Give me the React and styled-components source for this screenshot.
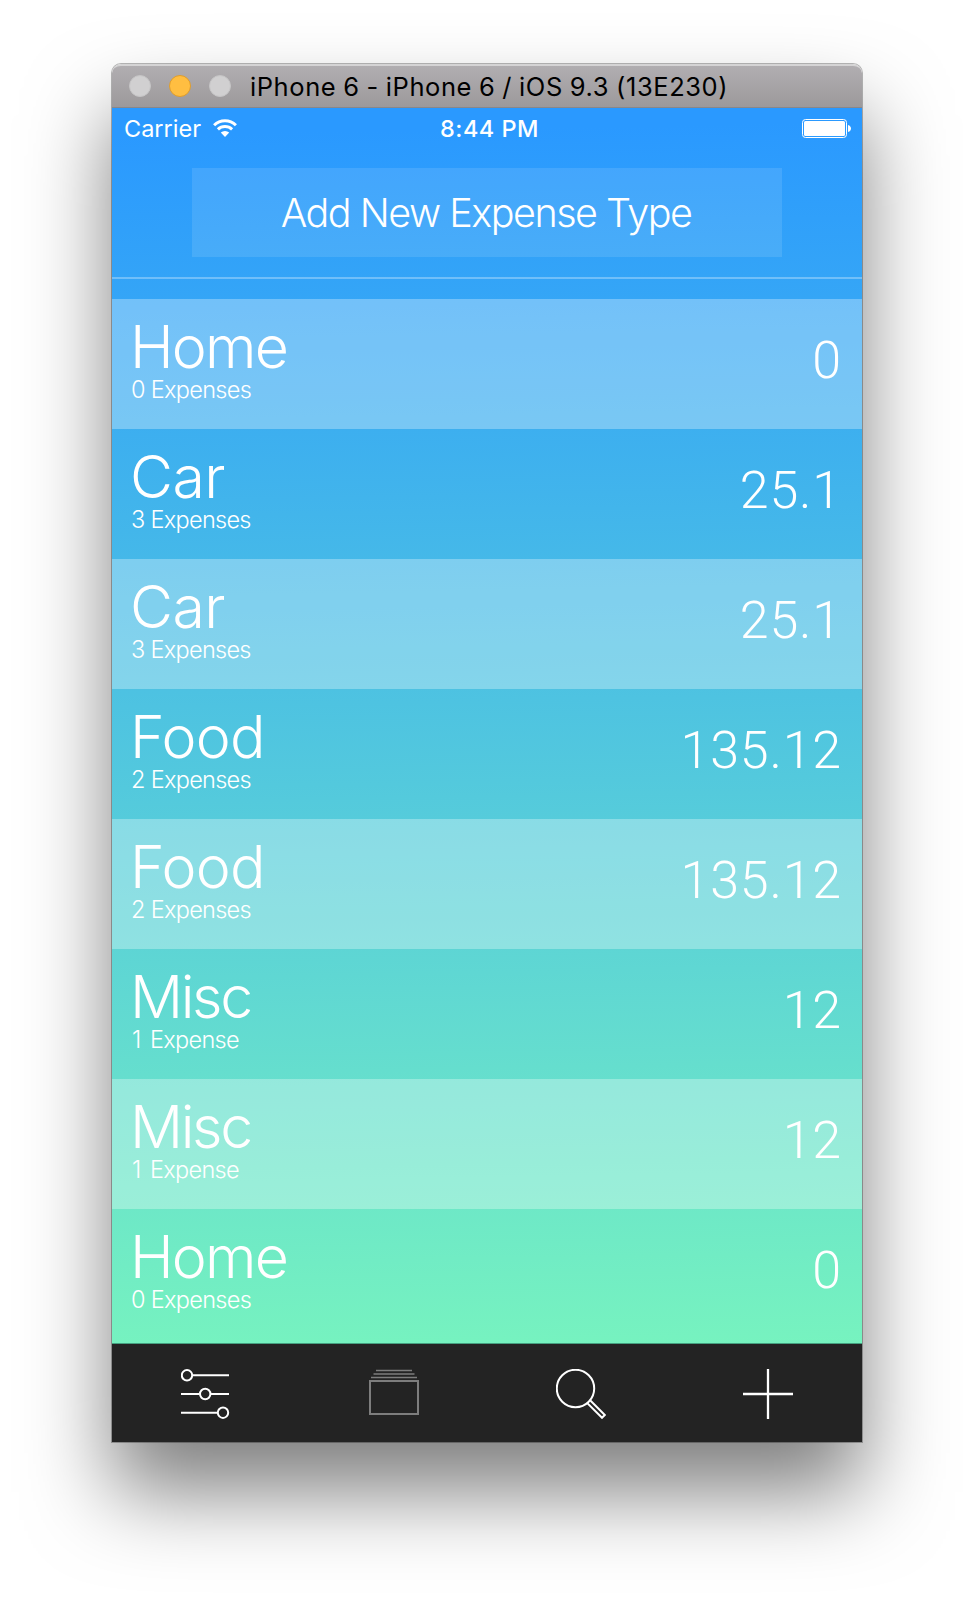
import React from "react";
import styled, { createGlobalStyle } from "styled-components";

const GlobalStyle = createGlobalStyle`
  * { box-sizing: border-box; }
  html, body { margin: 0; background: #fff; }
  body { overflow: hidden; }
`;

const Desktop = styled.div`
  width: 974px;
  height: 1602px;
  padding: 64px 112px 0;
  background: #fff;
  font-family: Inter, "Liberation Sans", sans-serif;
`;

const Window = styled.div`
  width: 750px;
  height: 1378px;
  display: flex;
  flex-direction: column;
  border-radius: 9px 9px 0 0;
  box-shadow: 0 0 0 1px rgba(0, 0, 0, 0.28), 0 50px 84px rgba(0, 0, 0, 0.5);
`;

const TitleBar = styled.header`
  height: 44px;
  flex: none;
  display: flex;
  align-items: center;
  gap: 18px;
  padding: 0 17px;
  background: linear-gradient(#b1aeb1, #9c999b);
  border-top: 2px solid #d5d4d5;
  border-bottom: 1px solid #8a8789;
  border-radius: 9px 9px 0 0;
`;

const Light = styled.span`
  width: 22px;
  height: 22px;
  margin-top: -1px;
  border-radius: 50%;
  background: ${(p) => (p.$on ? "#ffbe41" : "#d1d0d1")};
  border: 1px solid ${(p) => (p.$on ? "#e09e2c" : "#c6c5c6")};
`;

const WindowTitle = styled.span`
  margin-left: 1px;
  font-size: 25.5px;
  line-height: 40px;
  letter-spacing: 0.58px;
  word-spacing: -0.8px;
  white-space: pre;
  color: #000;
`;

const Screen = styled.main`
  flex: 1;
  min-height: 0;
  display: flex;
  flex-direction: column;
  background: linear-gradient(179deg, #2a99ff 2%, #77f3bf 93%);
  color: #fff;
`;

const StatusBar = styled.div`
  height: 40px;
  flex: none;
  display: grid;
  grid-template-columns: 1fr auto 1fr;
  align-items: center;
  padding: 0 11px 0 12px;
`;

const Carrier = styled.div`
  display: flex;
  align-items: center;
  gap: 12px;
  font-size: 23.5px;
  letter-spacing: 0;
`;

const Clock = styled.div`
  padding-left: 4px;
  font-size: 23.5px;
  font-weight: 550;
  letter-spacing: 0.5px;
`;

const Battery = styled.div`
  display: flex;
  justify-content: flex-end;
`;

const AddArea = styled.div`
  height: 131px;
  flex: none;
  display: flex;
  justify-content: center;
  align-items: flex-start;
  padding-top: 20px;
  border-bottom: 2px solid rgba(255, 255, 255, 0.3);
`;

const AddButton = styled.button`
  width: 590px;
  height: 89px;
  border: 0;
  padding: 2px 2px 0 0;
  background: rgba(255, 255, 255, 0.11);
  color: #fff;
  font: 300 39.5px/87px Inter, sans-serif;
  letter-spacing: -1.5px;
`;

const List = styled.ul`
  flex: 1;
  min-height: 0;
  margin: 20px 0 0;
  padding: 0;
  list-style: none;
`;

const Row = styled.li`
  height: 130px;
  display: flex;
  justify-content: space-between;
  padding: 0 20px 0 19px;
  background: ${(p) => (p.$tinted ? "rgba(255, 255, 255, 0.31)" : "transparent")};
`;

const Labels = styled.div`
  display: flex;
  flex-direction: column;
  padding-top: 18px;
`;

const Name = styled.span`
  margin-left: -1px;
  font-size: 59px;
  font-weight: 300;
  line-height: 60px;
  letter-spacing: ${(p) => p.$track};
`;

const Count = styled.span`
  font-size: 23.5px;
  font-weight: 300;
  line-height: 26px;
  letter-spacing: -0.7px;
  word-spacing: ${(p) => (p.$single ? "3.5px" : "0")};
  padding-left: ${(p) => (p.$single ? "1px" : "0")};
`;

const Amount = styled.span`
  padding-top: 32px;
  font-family: Roboto, "Liberation Sans", sans-serif;
  font-size: 52px;
  font-weight: 300;
  line-height: 60px;
  letter-spacing: 0.8px;
`;

const TabBar = styled.nav`
  height: 99px;
  flex: none;
  display: grid;
  grid-template-columns: 188px 188px 186px 188px;
  padding-top: 1px;
  background: #232323;
  border-top: 1px solid #45a080;
`;

const Tab = styled.a`
  display: flex;
  align-items: center;
  justify-content: center;
  color: ${(p) => (p.$dim ? "#7d7d7d" : "#fff")};
`;

const Icon = styled.svg`
  display: block;
  fill: none;
  stroke: currentColor;
  stroke-width: 2;
`;

const WifiIcon = () => (
  <svg width="24" height="18" viewBox="0 0 24 18">
    <g fill="none" stroke="#fff" strokeWidth="3">
      <path d="M1.1 6.2a15.6 15.6 0 0 1 21.8 0" />
      <path d="M4.9 10.3a10.2 10.2 0 0 1 14.2 0" />
    </g>
    <path d="M7.8 13.6a6 6 0 0 1 8.4 0L12 18z" fill="#fff" />
  </svg>
);

const BatteryIcon = () => (
  <svg width="49" height="19" viewBox="0 0 49 19">
    <rect x="0.5" y="0.5" width="44" height="18" rx="3" fill="none" stroke="#fff" />
    <rect x="2" y="2" width="41" height="15" rx="1.5" fill="#fff" />
    <path d="M46 6c4 1 4 6 0 7z" fill="#fff" />
  </svg>
);

const SlidersIcon = () => (
  <Icon width="50" height="50" viewBox="0 0 50 50">
    <circle cx="6" cy="6.3" r="5.2" />
    <path d="M11.5 6.3H48M0 25H18.5M30 25H48M0 43.7H36.5" />
    <circle cx="24.2" cy="25" r="5.2" />
    <circle cx="42" cy="43.7" r="5.2" />
  </Icon>
);

const StackIcon = () => (
  <Icon width="50" height="50" viewBox="0 0 50 50">
    <path d="M7 1.5H43M4.5 5H45.5M2 8.5H48" strokeWidth="1.7" />
    <rect x="1" y="12" width="48" height="33" />
  </Icon>
);

const SearchIcon = () => (
  <Icon width="50" height="50" viewBox="0 0 50 50">
    <circle cx="19.5" cy="19.5" r="18.7" />
    <path d="M31.3 34.1L46 48.8L48.8 46L34.1 31.3" />
  </Icon>
);

const PlusIcon = () => (
  <Icon width="50" height="50" viewBox="0 0 50 50">
    <path d="M25 0V50M0 25H50" strokeWidth="2.3" />
  </Icon>
);

const nameTracking = { Home: "-1.8px", Car: "-0.5px", Food: "-0.8px", Misc: "-2.4px" };

const expenses = [
  { name: "Home", total: 0, amount: "0" },
  { name: "Car", total: 3, amount: "25.1" },
  { name: "Car", total: 3, amount: "25.1" },
  { name: "Food", total: 2, amount: "135.12" },
  { name: "Food", total: 2, amount: "135.12" },
  { name: "Misc", total: 1, amount: "12" },
  { name: "Misc", total: 1, amount: "12" },
  { name: "Home", total: 0, amount: "0" },
];

export default function App() {
  return (
    <Desktop>
      <GlobalStyle />
      <Window>
        <TitleBar>
          <Light />
          <Light $on />
          <Light />
          <WindowTitle>iPhone 6 - iPhone 6 / iOS 9.3 (13E230)</WindowTitle>
        </TitleBar>
        <Screen>
          <StatusBar>
            <Carrier>Carrier <WifiIcon /></Carrier>
            <Clock>8:44 PM</Clock>
            <Battery><BatteryIcon /></Battery>
          </StatusBar>
          <AddArea>
            <AddButton>Add New Expense Type</AddButton>
          </AddArea>
          <List>
            {expenses.map((item, i) => (
              <Row key={i} $tinted={i % 2 === 0}>
                <Labels>
                  <Name $track={nameTracking[item.name]}>{item.name}</Name>
                  <Count $single={item.total === 1}>
                    {`${item.total} ${item.total === 1 ? "Expense" : "Expenses"}`}
                  </Count>
                </Labels>
                <Amount>{item.amount}</Amount>
              </Row>
            ))}
          </List>
          <TabBar>
            <Tab><SlidersIcon /></Tab>
            <Tab $dim><StackIcon /></Tab>
            <Tab><SearchIcon /></Tab>
            <Tab><PlusIcon /></Tab>
          </TabBar>
        </Screen>
      </Window>
    </Desktop>
  );
}
